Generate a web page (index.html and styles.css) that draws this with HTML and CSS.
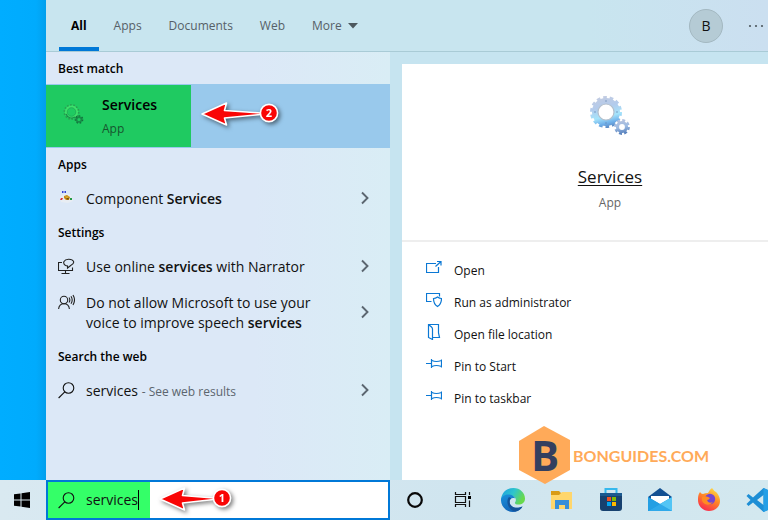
FILE: index.html
```
<!DOCTYPE html>
<html lang="en">
<head>
<meta charset="utf-8">
<title>Search</title>
<link rel="stylesheet" href="styles.css">
</head>
<body>
<svg class="defs" width="0" height="0" aria-hidden="true">
  <defs>
    <linearGradient id="steel" gradientUnits="userSpaceOnUse" x1="12" y1="2" x2="20" y2="34">
      <stop offset="0" stop-color="#c3cbe0"/><stop offset="0.35" stop-color="#b3cbec"/><stop offset="0.65" stop-color="#a5e4fb"/><stop offset="0.85" stop-color="#6fb0ea"/><stop offset="1" stop-color="#5a86c0"/>
    </linearGradient>
    <linearGradient id="steel-small" gradientUnits="userSpaceOnUse" x1="32" y1="25" x2="35" y2="41">
      <stop offset="0" stop-color="#b9c3de"/><stop offset="0.5" stop-color="#9dbbe2"/><stop offset="1" stop-color="#4673b4"/>
    </linearGradient>
    <symbol id="chevron" viewBox="0 0 8 14"><path d="M1 1.500 6.500 7 1 12.500" fill="none" stroke="#5b6670" stroke-width="1.900"/></symbol>
    <symbol id="search" viewBox="0 0 17 17"><circle cx="10.500" cy="6" r="5.300" fill="none" stroke="#111" stroke-width="1.100"/><path d="M6.800 9.800.6 16" stroke="#111" stroke-width="1.100"/></symbol>
    <symbol id="pin" viewBox="0 0 16 16"><path d="M0 7.500h6M5.500 3v9M6 4.500q4 2 9.500 0M6 10.500q4-2 9.500 0M15.500 3.500v8" fill="none" stroke="#0b78d4" stroke-width="1.200"/></symbol>
    <symbol id="arrow-long" viewBox="0 0 84 34">
      <path d="M4 16 28.500 5l-2 7.500 36 2.500v1.500l-36 3.500 2 7z" fill="#f90505" stroke="#fff" stroke-width="1.600" stroke-linejoin="round"/>
      <circle cx="71" cy="15" r="8.600" fill="#f90505" stroke="#fff" stroke-width="1.600"/>
    </symbol>
    <symbol id="arrow-short" viewBox="0 0 84 34">
      <path d="M3 16 27.500 5l-2 7.500 31 2.500v1.500l-31 3.500 2 7z" fill="#f90505" stroke="#fff" stroke-width="1.600" stroke-linejoin="round"/>
      <circle cx="65" cy="15" r="8.600" fill="#f90505" stroke="#fff" stroke-width="1.600"/>
    </symbol>
  </defs>
</svg>

<main class="screen">
  <section class="panel" aria-label="Search">
    <header class="topbar">
      <nav class="tabs">
        <button class="tab active">All</button>
        <button class="tab">Apps</button>
        <button class="tab">Documents</button>
        <button class="tab">Web</button>
        <button class="tab">More<svg class="caret" width="10" height="6" viewBox="0 0 10 6" aria-hidden="true"><path d="M0 0h10L5 5.500z" fill="#4d585e"/></svg></button>
      </nav>
      <button class="avatar" aria-label="Account B">B</button>
      <button class="dots" aria-label="Options"><svg width="16" height="4" viewBox="0 0 16 4"><circle cx="2" cy="2" r="1.100"/><circle cx="8" cy="2" r="1.100"/><circle cx="14" cy="2" r="1.100"/></svg></button>
    </header>

    <div class="content">
      <div class="results">
        <h2>Best match</h2>
        <a class="best" href="#services">
          <span class="best-mark">
            <svg class="best-icon" width="24" height="24" viewBox="0 0 24 24" aria-hidden="true">
              <g fill="none"><circle cx="9.500" cy="8" r="5.500" stroke="#3fe06b" stroke-width="2.500"/><circle cx="9.500" cy="8" r="7.200" stroke="#2a9f52" stroke-width="1.600" stroke-dasharray="1.616 1.616"/><path d="M4 10a6 6 0 0 0 9 3" stroke="#168c49" stroke-width="1.200"/><circle cx="9.500" cy="8" r="4.300" stroke="#1da854" stroke-width=".8"/><circle cx="17" cy="15.500" r="2.400" stroke="#178a47" stroke-width="1.600"/><circle cx="17" cy="15.500" r="3.700" stroke="#126f3b" stroke-width="1.300" stroke-dasharray="1.660 1.660"/></g>
            </svg>
            <span class="best-text"><strong>Services</strong><small>App</small></span>
          </span>
          <span class="callout"><svg width="84" height="34" aria-hidden="true"><use href="#arrow-long"/></svg><b>2</b></span>
        </a>

        <h2>Apps</h2>
        <a class="row" href="#component">
          <svg width="17" height="17" viewBox="0 0 17 17" aria-hidden="true"><path d="m2 7 5-4 6 2 2 6-5 2-7-1z" fill="#e8edf3"/><path d="M4 1h1.500v2H4zM6.500 1H8v2H6.500z" fill="#3444d8"/><path d="m6 6 3-1 3 2-1 3H8L6 8z" fill="#c38a16"/><path d="m7 6 2 1 2-1-2 2z" fill="#f2d348"/><path d="m8 8 2 2 1-2" fill="#704c10"/><path d="M3 8h2l-1 2H2z" fill="#d8333d"/><path d="M12 8h2v2h-2z" fill="#249b45"/></svg>
          <span class="label">Component <b>Services</b></span>
          <svg class="chev" width="8" height="14" aria-hidden="true"><use href="#chevron"/></svg>
        </a>

        <h2>Settings</h2>
        <a class="row" href="#narrator">
          <svg width="17" height="17" viewBox="0 0 17 17" aria-hidden="true"><g fill="none" stroke="#222" stroke-width="1.100"><path d="M4 4.500H.5v8h14V9.500M7.500 12.500v3M3.500 15.500h8"/><path d="M7.500 7.500C4 5 6 1.500 10.500 1.200c5.500-.2 7 4 2.500 6L9.500 10V8z"/></g></svg>
          <span class="label">Use online <b>services</b> with Narrator</span>
          <svg class="chev" width="8" height="14" aria-hidden="true"><use href="#chevron"/></svg>
        </a>
        <a class="row tall" href="#speech">
          <svg width="17" height="17" viewBox="0 0 17 17" aria-hidden="true"><g fill="none" stroke="#222" stroke-width="1.100"><circle cx="6" cy="6" r="3.700"/><path d="M.6 15c.3-3.300 2.500-5.300 5.400-5.300s5.100 2 5.400 5.300M11 3.500q1.700 2.500 0 5M13 2.200q2.400 3.800 0 7.600M15 1q3 5 0 10"/></g></svg>
          <span class="label">Do not allow Microsoft to use your voice to improve speech <b>services</b></span>
          <svg class="chev" width="8" height="14" aria-hidden="true"><use href="#chevron"/></svg>
        </a>

        <h2>Search the web</h2>
        <a class="row" href="#web">
          <svg width="17" height="17" aria-hidden="true"><use href="#search"/></svg>
          <span class="label">services <small>- See web results</small></span>
          <svg class="chev" width="8" height="14" aria-hidden="true"><use href="#chevron"/></svg>
        </a>
      </div>

      <article class="detail">
        <div class="hero">
          <svg width="44" height="44" viewBox="0 0 44 44" aria-hidden="true">
            <g fill="none">
              <circle cx="18" cy="18" r="14.300" stroke="url(#steel)" stroke-width="3.400" stroke-dasharray="3.600 2.818"/>
              <circle cx="18" cy="18" r="11" stroke="url(#steel)" stroke-width="6"/>
              <circle cx="18" cy="18" r="8" stroke="#b4bfcc" stroke-width="1.200"/>
              <g fill="#6689b5"><circle cx="18" cy="7" r=".7"/><circle cx="29" cy="18" r=".7"/><circle cx="18" cy="29" r=".7"/><circle cx="7" cy="18" r=".7"/></g>
              <circle cx="34" cy="33" r="6.600" stroke="url(#steel-small)" stroke-width="2.600" stroke-dasharray="2.900 2.284"/>
              <circle cx="34" cy="33" r="4.500" stroke="url(#steel-small)" stroke-width="3.200"/>
            </g>
          </svg>
          <h1><a href="#services">Services</a></h1>
          <p>App</p>
        </div>
        <div class="actions">
          <button><svg width="16" height="16" viewBox="0 0 16 16" aria-hidden="true"><path d="M10 3.500H.5v9h12V7M9.500 6.500l5.500-5M11 1.500h4v4" fill="none" stroke="#0b78d4" stroke-width="1.200"/></svg>Open</button>
          <button><svg width="16" height="16" viewBox="0 0 16 16" aria-hidden="true"><path d="M5.500 9.500h-5v-8h13v3M11.500 5q2 1.500 4 1.500 0 5.500-4 8-4-2.500-4-8 2 0 4-1.500z" fill="none" stroke="#0b78d4" stroke-width="1.200"/></svg>Run as administrator</button>
          <button><svg width="16" height="16" viewBox="0 0 16 16" aria-hidden="true"><path d="M2.500 13.500V.5h10v8.500l1 4.500H6.500M2.500.5l3 2.500q1 1 1 2v10.500l-4-2z" fill="none" stroke="#0b78d4" stroke-width="1.200"/></svg>Open file location</button>
          <button><svg width="16" height="16" aria-hidden="true"><use href="#pin"/></svg>Pin to Start</button>
          <button><svg width="16" height="16" aria-hidden="true"><use href="#pin"/></svg>Pin to taskbar</button>
        </div>
      </article>
    </div>
  </section>
  <div class="brand">
    <svg width="52" height="58" viewBox="0 0 52 58" aria-hidden="true"><path d="M25 0 51 14v30L26 58 0 44V15z" fill="#ffaa59"/><text x="12" y="45" class="brand-b">B</text></svg>
    <span>BONGUIDES.COM</span>
  </div>
</main>

<footer class="taskbar">
  <button class="start" aria-label="Start"><svg width="16" height="16" viewBox="0 0 16 16"><path d="m0 2.300 6.500-.9v6.100H0zM7.500 1.200 16 0v7.500H7.500zM0 8.500h6.500v6.100L0 13.700zM7.500 8.500H16V16l-8.500-1.200z"/></svg></button>
  <div class="searchbox">
    <label class="query" for="q"><svg width="17" height="17" aria-hidden="true"><use href="#search"/></svg><input id="q" type="text" value="services" aria-label="Search"></label>
    <span class="callout short"><svg width="84" height="34" aria-hidden="true"><use href="#arrow-short"/></svg><b>1</b></span>
  </div>
  <button class="task" aria-label="Cortana"><svg width="24" height="24" viewBox="0 0 24 24"><circle cx="12" cy="12" r="6.800" fill="none" stroke="#080808" stroke-width="2.200"/></svg></button>
  <button class="task" aria-label="Task view"><svg width="24" height="24" viewBox="0 0 24 24"><path d="M3.500 4v2.500h10V4M3.500 19v-2.500h10V19M3.500 8.500h10v6h-10zM17.500 4v3M17.500 12.500V19" fill="none" stroke="#111" stroke-width="1.200"/><path d="M16 8h3v3h-3z"/></svg></button>
  <button class="task" aria-label="Edge"><svg width="26" height="26" viewBox="0 0 26 26">
    <defs><linearGradient id="e1" x1="0" y1="0" x2="1" y2=".4"><stop stop-color="#1b9de2"/><stop offset=".55" stop-color="#2fc5cc"/><stop offset="1" stop-color="#68d94c"/></linearGradient><linearGradient id="e2" x1="0" y1="0" x2=".5" y2="1"><stop stop-color="#1a91dc"/><stop offset="1" stop-color="#1264b7"/></linearGradient></defs>
    <path d="M1 12C2 5 7 1 13.500 1 20 1 25 6 25 11.500c0 4-3 6-6.500 6-2.500 0-4-1-3.500-2 2-2.500.5-6.500-3.500-6.500C6 8.500 2 10 1 14z" fill="url(#e1)"/>
    <path d="M1 12.500C2 8.500 6 7 9.500 7.500c3 .4 5 2 5.700 4-3.500-1.500-6 1-5.500 4 .6 4.500 6 7 12.800 4-2 3.500-5.500 5.500-9.500 5.500C6 25 .5 19 1 12.500z" fill="url(#e2)"/>
    <path d="M9 10c-4 5 0 13 6 14.500 3.500-.5 6-2.300 7.500-5-6.500 3-12.200.5-12.800-4-.2-2 .3-3.300 1.600-4.200z" fill="#155499"/></svg></button>
  <button class="task" aria-label="File Explorer"><svg width="24" height="24" viewBox="0 0 24 24"><path d="M1 3h8l2 2h10v5H1z" fill="#d99b17"/><path d="M1 7h8l3-3h10v17H1z" fill="#ffd66c"/><path d="M5 21v-9h14v9h-4v-4H9v4z" fill="#398fd9"/></svg></button>
  <button class="task" aria-label="Store"><svg width="24" height="24" viewBox="0 0 24 24"><path d="M6.500 6V1h11v5" fill="none" stroke="#35b8ed" stroke-width="2"/><path d="M1 5h22v15q0 3-3 3H4q-3 0-3-3z" fill="#17416f"/><path d="M1 5h22v3H1z" fill="#1b598e"/><path d="M8 9h4v4H8z" fill="#f25022"/><path d="M13 9h4v4h-4z" fill="#7fba00"/><path d="M8 14h4v4H8z" fill="#00a4ef"/><path d="M13 14h4v4h-4z" fill="#ffb900"/></svg></button>
  <button class="task" aria-label="Mail"><svg width="26" height="24" viewBox="0 0 26 24"><path d="M1 9 13 0l12 9v4H1z" fill="#125092"/><path d="M4 8h18v8H4z" fill="#fff"/><path d="m1 9 12 7L25 9v14H1z" fill="#209be0"/><path d="m1 23 12-7L25 23z" fill="#2fa9ea"/><path d="m13 16 12-7v14z" fill="#53c5f5"/><path d="m1 9 12 7L1 23z" fill="#249fe3"/></svg></button>
  <button class="task" aria-label="Firefox"><svg width="24" height="24" viewBox="0 0 24 24">
    <defs><linearGradient id="f1" x1=".8" y1="0" x2=".3" y2="1"><stop stop-color="#ffe14a"/><stop offset=".45" stop-color="#ff8a26"/><stop offset="1" stop-color="#f9284f"/></linearGradient></defs>
    <path d="M3 4q1 2 3 2 2-1 5-1 1-3 4-5 2 3 4 4l1 1c2 3 3 5 3 8 0 6-5 10-11 10S1 18 1 12c0-3 0-5 2-8z" fill="url(#f1)"/><circle cx="13" cy="11" r="5.200" fill="#7645d0"/><path d="M5 9q4-2 8 1-1 2-3 2 1 4 6 2-3 4-8 2-4-2-3-7z" fill="#ff8b22"/></svg></button>
  <button class="task" aria-label="Visual Studio Code"><svg width="24" height="24" viewBox="0 0 24 24"><path d="m17.500 0 5.500 2.500v19L17.500 24 7 14.500l-4.500 3.400L.5 16l4-4-4-4 2-2L7 9.500zM17.500 7 11 12l6.500 5z" fill="#1d8ed5" fill-rule="evenodd"/><path d="m17.500 0 5.500 2.500v19L17.500 24z" fill="#259fe6"/></svg></button>
</footer>
</body>
</html>
```
FILE: styles.css
```
* { box-sizing: border-box; }
body {
  margin: 0;
  min-height: 100vh;
  display: flex;
  flex-direction: column;
  overflow: hidden;
  font-family: "Open Sans", "Noto Sans", sans-serif;
  font-size: 12px;
  color: #111;
}
button { border: 0; padding: 0; background: none; font: inherit; color: inherit; }
a { color: inherit; text-decoration: none; }
svg { display: block; flex: none; }
.defs { position: absolute; }

.screen {
  position: relative;
  flex: 1;
  display: flex;
  padding-left: 46px;
  background: linear-gradient(90deg, #00adff 0, #00abfd 36px, #029fec 46px);
}
.panel { flex: 1; min-width: 0; display: flex; flex-direction: column; overflow: hidden; background: #c6e4f0; }

.topbar {
  display: flex;
  align-items: center;
  height: 52px;
  padding-left: 13px;
  border-bottom: 1px solid #a9cbd6;
  background: linear-gradient(90deg, #c8e5ef 75%, #cbdff0);
}
.tabs { display: flex; gap: 3px; flex: 1; align-self: stretch; }
.tab { display: flex; align-items: center; padding: 4px 12px 0; border-bottom: 4px solid transparent; color: #566067; }
.tab.active { color: #000; font-weight: 700; border-color: #0078d7; }
.caret { margin-left: 6px; }
.avatar { width: 34px; height: 34px; border: 1px solid #a3b8c1; border-radius: 50%; background: #b5cbd5; font-size: 14px; color: #111; }
.dots { margin: 0 4px 0 25px; fill: #4d585e; }

.content { flex: 1; display: grid; grid-template-columns: 344px minmax(416px, 1fr); column-gap: 12px; }
.results { background: linear-gradient(90deg, #dce8f7 60%, #d9edf5); }
.results h2 { margin: 0; padding: 2px 0 0 12px; font-size: 12px; line-height: 30px; font-weight: 600; color: #000; }

.best { position: relative; display: flex; height: 64px; padding: 1px 0; background: #99c9ec; }
.best-mark { display: flex; align-items: center; width: 145px; padding-left: 16px; gap: 16px; background: #1fca61; }
.best-text { display: flex; flex-direction: column; padding-top: 2px; }
.best-text strong { font-size: 14px; line-height: 24px; font-weight: 600; color: #000; }
.best-text small { font-size: 12px; line-height: 24px; color: #17552f; }

.callout { position: absolute; left: 152px; top: 14px; filter: drop-shadow(2px 2px 2px rgba(0, 0, 0, 0.5)); }
.callout b { position: absolute; left: 63px; top: 7px; width: 16px; text-align: center; font-size: 11px; line-height: 16px; color: #fff; }
.callout.short { left: 109px; top: 1px; }
.callout.short b { left: 57px; }

.row { display: flex; align-items: center; height: 36px; padding: 0 21px 0 12px; gap: 11px; font-size: 14px; line-height: 20px; }
.row b { font-weight: 600; }
.row small { font-size: 12px; color: #5b656e; }
.row.tall { height: 56px; }
.row.tall > svg:first-child { align-self: flex-start; margin-top: 10px; }
.label { flex: 1; padding-top: 2px; }
.row.tall .label { padding-right: 32px; }

.detail { margin-top: 12px; background: #fff; }
.hero { display: flex; flex-direction: column; align-items: center; padding-top: 30px; height: 178px; border-bottom: 2px solid #eee; }
.hero h1 { margin: 26px 0 0; font-size: 17px; line-height: 26px; font-weight: 400; }
.hero a { text-decoration: underline; text-underline-offset: 2px; text-decoration-thickness: 1px; }
.hero p { margin: 0; line-height: 26px; color: #666; }
.actions { display: flex; flex-direction: column; padding: 12px 24px; }
.actions button { display: flex; align-items: center; gap: 12px; height: 32px; }
.actions svg { margin-bottom: 4px; }

.brand { position: absolute; left: 519px; bottom: -4px; z-index: 1; display: flex; align-items: center; gap: 2px; font-family: Lato, "Open Sans", sans-serif; font-size: 16px; font-weight: 700; color: #ffaa59; }
.brand-b { font-family: "Open Sans", sans-serif; font-size: 42px; font-weight: 700; fill: #343f5f; }

.taskbar { display: flex; height: 40px; overflow: hidden; background: linear-gradient(90deg, #d9e9f1, #d0e5ef 60%, #d3e8ef); }
.start { flex: none; width: 46px; display: grid; place-items: center; padding-right: 2px; }
.searchbox { position: relative; flex: none; width: 344px; border: 2px solid #0078d7; background: #fff; }
.query { display: flex; align-items: center; gap: 11px; width: 102px; height: 100%; padding-left: 10px; background: #34ff68; }
.query input { field-sizing: content; border: 0; border-right: 1px solid #000; padding: 0; outline: 0; background: none; font: inherit; font-size: 14px; line-height: 20px; color: #111; }
.task { flex: none; width: 49px; display: grid; place-items: center; }
```
